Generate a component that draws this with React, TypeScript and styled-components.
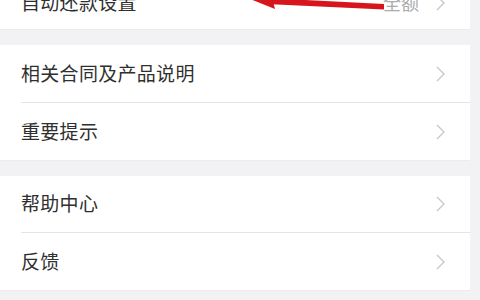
import React from 'react';
import styled, { createGlobalStyle } from 'styled-components';

const GlobalStyle = createGlobalStyle`
  html, body {
    margin: 0;
    padding: 0;
    background: #f2f2f4;
    overflow: hidden;
  }
  body {
    font-family: "Noto Sans CJK SC", "Noto Sans", sans-serif;
  }
`;

const Screen = styled.div`
  position: relative;
  width: 480px;
  height: 300px;
  overflow: hidden;
  background: #f2f2f4;
`;

// page is scrolled: the first row is partly above the top edge
const Page = styled.div`
  display: flex;
  flex-direction: column;
  gap: 15px;
  margin-top: -23px;
  padding-right: 10px;
`;

const Group = styled.div`
  background: #fff;
  display: flex;
  flex-direction: column;
  border-bottom: 1px solid #ececef;
`;

const Row = styled.div<{ $h: number }>`
  height: ${(p) => p.$h}px;
  box-sizing: border-box;
  display: flex;
  align-items: center;
  padding: 0 25px 3px 21px;
`;

const Divider = styled.div`
  height: 1px;
  margin-left: 21px;
  background: #e4e4e6;
`;

const Label = styled.span`
  flex: 1;
  font-size: 19px;
  color: #2f2f2f;
  letter-spacing: 0.3px;
`;

const Value = styled.span`
  font-size: 18px;
  color: #ababab;
  margin-right: 17px;
`;

const Chevron = () => (
  <svg width="9" height="16" viewBox="0 0 9 16" style={{ marginTop: 3 }}>
    <path d="M1 1 L8 8 L1 15" fill="none" stroke="#c8c8c8" strokeWidth="1.4" />
  </svg>
);

const Arrow = styled.svg`
  position: absolute;
  left: 0;
  top: 0;
  pointer-events: none;
`;

type Item = { label: string; value?: string; h: number };

const groups: Item[][] = [
  [{ label: '自动还款设置', value: '全额', h: 52 }],
  [
    { label: '相关合同及产品说明', h: 57 },
    { label: '重要提示', h: 57 },
  ],
  [
    { label: '帮助中心', h: 56 },
    { label: '反馈', h: 57 },
  ],
];

export default function App() {
  return (
    <Screen>
      <GlobalStyle />
      <Page>
        {groups.map((g, gi) => (
          <Group key={gi}>
            {g.map((it, i) => (
              <React.Fragment key={it.label}>
                {i > 0 && <Divider />}
                <Row $h={it.h}>
                  <Label>{it.label}</Label>
                  {it.value && <Value>{it.value}</Value>}
                  <Chevron />
                </Row>
              </React.Fragment>
            ))}
          </Group>
        ))}
      </Page>
      <Arrow width="480" height="30" viewBox="0 0 480 30">
        <path d="M384 4 L384 9.5 L266 4 L266 -2 Z" fill="#d7151d" />
        <path d="M245 -3 L275 9 L268 -18 Z" fill="#d7151d" />
      </Arrow>
    </Screen>
  );
}
